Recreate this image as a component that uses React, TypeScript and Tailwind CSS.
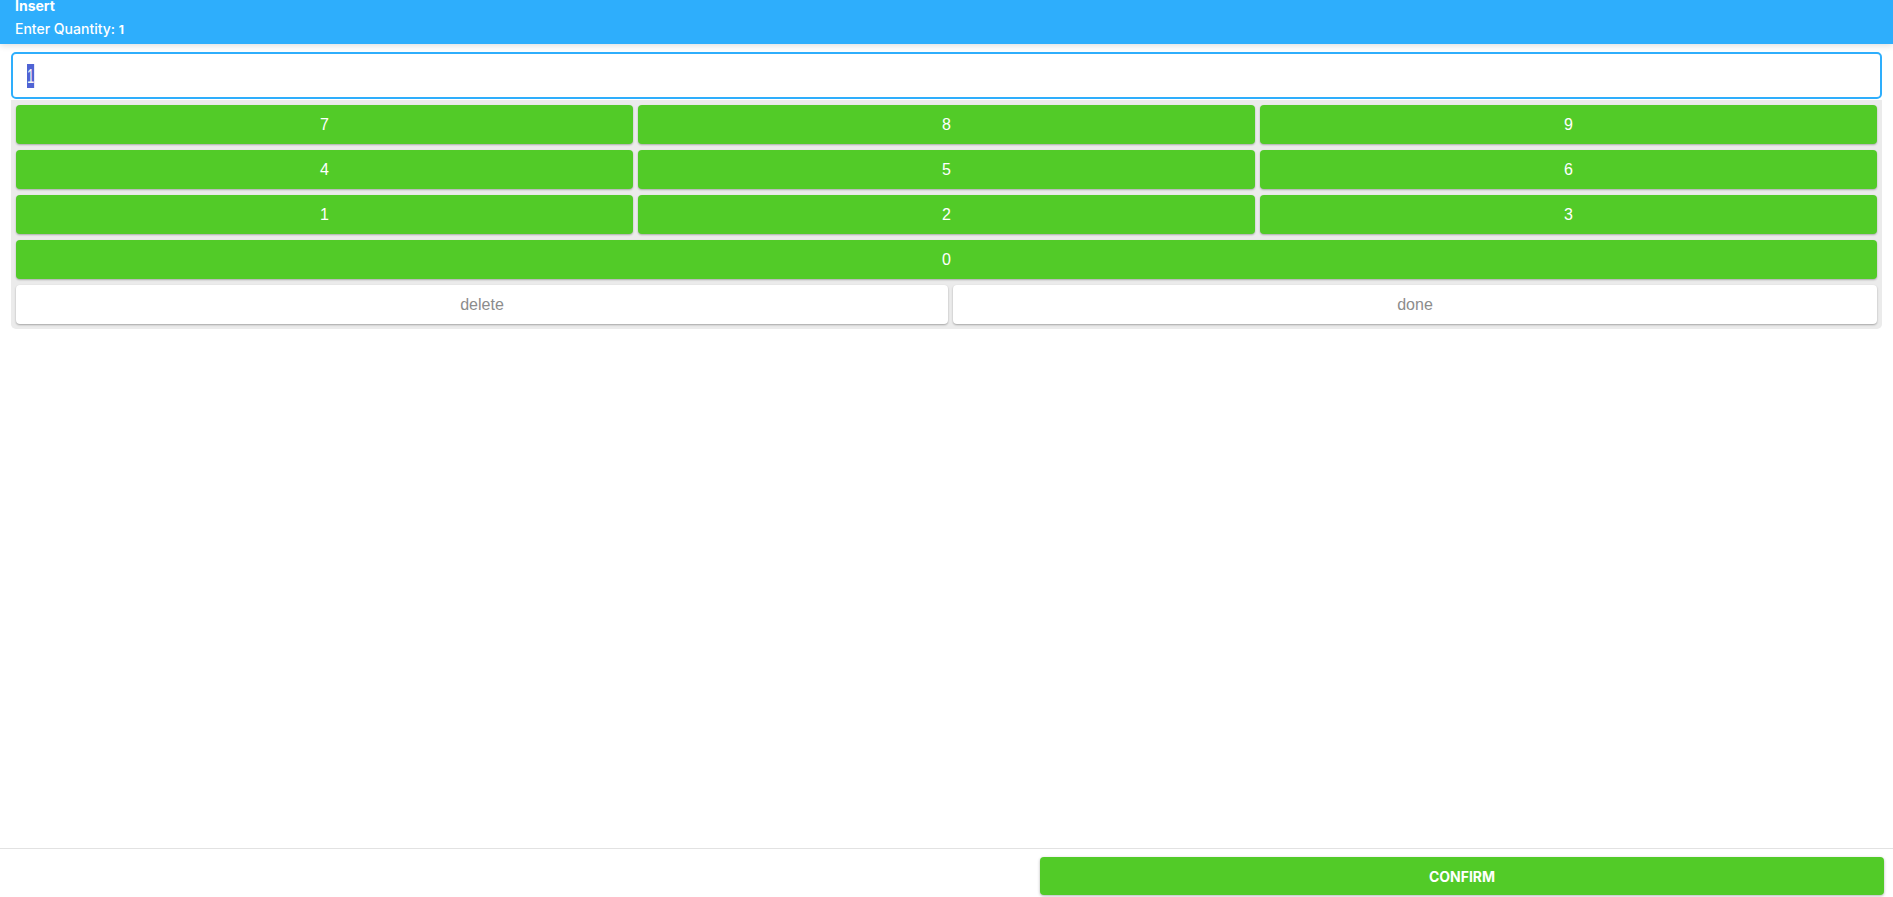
import React from 'react';

const digitRows = [
  ['7', '8', '9'],
  ['4', '5', '6'],
  ['1', '2', '3'],
];

function KeyButton({ label }: { label: string }) {
  return (
    <button
      type="button"
      className="h-[39px] rounded-[4px] bg-[#52cb28] text-[16px] text-white shadow-[0_1px_2px_rgba(0,0,0,0.28)] font-['Liberation_Sans',Arial,sans-serif]"
    >
      {label}
    </button>
  );
}

export default function App() {
  return (
    <div className="flex h-screen flex-col bg-white font-['Inter','Noto_Sans',sans-serif]">
      <header className="relative z-10 h-[44px] shrink-0 bg-[#2eaefc] px-[15px] text-white shadow-[0_2px_6px_rgba(0,0,0,0.12)]">
        <div className="-mt-[1px] text-[14px] font-bold leading-[14px]">Insert</div>
        <div className="mt-[6px] text-[14px] font-medium leading-[20px]">
          Enter Quantity: <b className="text-[12px] font-bold">1</b>
        </div>
      </header>

      <main className="flex-1 px-[11px] pt-[8px]">
        <div className="flex h-[47px] items-center rounded-[5px] border-2 border-[#2eaefc] bg-white pl-[14px]">
          <span className="inline-block origin-left scale-x-65 bg-[#4f63d4] text-[20px] leading-[24px] text-[#f4f4f4] font-['Liberation_Sans',Arial,sans-serif]">
            1
          </span>
        </div>

        <div className="mt-[1px] flex flex-col gap-[6px] rounded-b-[5px] bg-[#ebebeb] p-[5px]">
          {digitRows.map((row) => (
            <div key={row[0]} className="grid grid-cols-3 gap-[5px]">
              {row.map((d) => (
                <KeyButton key={d} label={d} />
              ))}
            </div>
          ))}
          <KeyButton label="0" />
          <div className="grid grid-cols-[932fr_924fr] gap-[5px]">
            <button
              type="button"
              className="h-[39px] rounded-[4px] bg-white text-[16px] text-[#8c8c8c] shadow-[0_1px_2px_rgba(0,0,0,0.3)] font-['Liberation_Sans',Arial,sans-serif]"
            >
              delete
            </button>
            <button
              type="button"
              className="h-[39px] rounded-[4px] bg-white text-[16px] text-[#8c8c8c] shadow-[0_1px_2px_rgba(0,0,0,0.3)] font-['Liberation_Sans',Arial,sans-serif]"
            >
              done
            </button>
          </div>
        </div>
      </main>

      <footer className="flex h-[49px] shrink-0 justify-end border-t border-[#e2e2e2] pr-[9px] pt-[8px]">
        <button
          type="button"
          className="h-[38px] w-[844px] rounded-[4px] bg-[#52cb28] text-[14px] font-bold text-white shadow-[0_1px_3px_rgba(0,0,0,0.3)]"
        >
          CONFIRM
        </button>
      </footer>
    </div>
  );
}
